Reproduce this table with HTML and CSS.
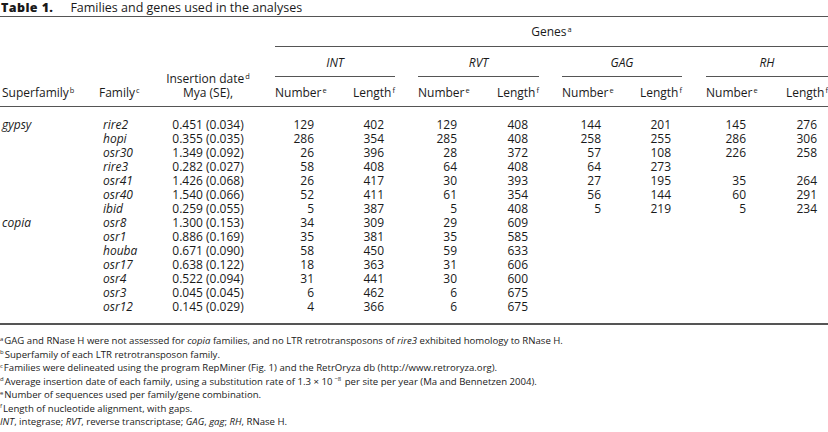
FILE: index.html
```html
<!DOCTYPE html>
<html>
<head>
<meta charset="utf-8">
<link rel="stylesheet" href="styles.css">
</head>
<body>
<div class="page">
  <div class="title"><b>Table 1.</b><span class="title-text">Families and genes used in the analyses</span></div>

  <div class="thead">
    <div class="genes">Genes<sup>a</sup></div>
    <div class="grp g1"><i>INT</i></div>
    <div class="grp g2"><i>RVT</i></div>
    <div class="grp g3"><i>GAG</i></div>
    <div class="grp g4"><i>RH</i></div>
    <div class="hc sf">Superfamily<sup>b</sup></div>
    <div class="hc fam">Family<sup>c</sup></div>
    <div class="hc ins">Insertion date<sup>d</sup><br>Mya (SE),</div>
    <div class="hc num c4">Number<sup>e</sup></div>
    <div class="hc len c5">Length<sup>f</sup></div>
    <div class="hc num c7">Number<sup>e</sup></div>
    <div class="hc len c8">Length<sup>f</sup></div>
    <div class="hc num c10">Number<sup>e</sup></div>
    <div class="hc len c11">Length<sup>f</sup></div>
    <div class="hc num c13">Number<sup>e</sup></div>
    <div class="hc len c14">Length<sup>f</sup></div>
  </div>

  <div class="tbody">
    <div class="row"><i class="sf">gypsy</i><i class="fam">rire2</i><span class="ins">0.451 (0.034)</span><span class="n c4">129</span><span class="l c5">402</span><span class="n c7">129</span><span class="l c8">408</span><span class="n c10">144</span><span class="l c11">201</span><span class="n c13">145</span><span class="l c14">276</span></div>
    <div class="row"><i class="fam">hopi</i><span class="ins">0.355 (0.035)</span><span class="n c4">286</span><span class="l c5">354</span><span class="n c7">285</span><span class="l c8">408</span><span class="n c10">258</span><span class="l c11">255</span><span class="n c13">286</span><span class="l c14">306</span></div>
    <div class="row"><i class="fam">osr30</i><span class="ins">1.349 (0.092)</span><span class="n c4">26</span><span class="l c5">396</span><span class="n c7">28</span><span class="l c8">372</span><span class="n c10">57</span><span class="l c11">108</span><span class="n c13">226</span><span class="l c14">258</span></div>
    <div class="row"><i class="fam">rire3</i><span class="ins">0.282 (0.027)</span><span class="n c4">58</span><span class="l c5">408</span><span class="n c7">64</span><span class="l c8">408</span><span class="n c10">64</span><span class="l c11">273</span></div>
    <div class="row"><i class="fam">osr41</i><span class="ins">1.426 (0.068)</span><span class="n c4">26</span><span class="l c5">417</span><span class="n c7">30</span><span class="l c8">393</span><span class="n c10">27</span><span class="l c11">195</span><span class="n c13">35</span><span class="l c14">264</span></div>
    <div class="row"><i class="fam">osr40</i><span class="ins">1.540 (0.066)</span><span class="n c4">52</span><span class="l c5">411</span><span class="n c7">61</span><span class="l c8">354</span><span class="n c10">56</span><span class="l c11">144</span><span class="n c13">60</span><span class="l c14">291</span></div>
    <div class="row"><i class="fam">ibid</i><span class="ins">0.259 (0.055)</span><span class="n c4">5</span><span class="l c5">387</span><span class="n c7">5</span><span class="l c8">408</span><span class="n c10">5</span><span class="l c11">219</span><span class="n c13">5</span><span class="l c14">234</span></div>
    <div class="row"><i class="sf">copia</i><i class="fam">osr8</i><span class="ins">1.300 (0.153)</span><span class="n c4">34</span><span class="l c5">309</span><span class="n c7">29</span><span class="l c8">609</span></div>
    <div class="row"><i class="fam">osr1</i><span class="ins">0.886 (0.169)</span><span class="n c4">35</span><span class="l c5">381</span><span class="n c7">35</span><span class="l c8">585</span></div>
    <div class="row"><i class="fam">houba</i><span class="ins">0.671 (0.090)</span><span class="n c4">58</span><span class="l c5">450</span><span class="n c7">59</span><span class="l c8">633</span></div>
    <div class="row"><i class="fam">osr17</i><span class="ins">0.638 (0.122)</span><span class="n c4">18</span><span class="l c5">363</span><span class="n c7">31</span><span class="l c8">606</span></div>
    <div class="row"><i class="fam">osr4</i><span class="ins">0.522 (0.094)</span><span class="n c4">31</span><span class="l c5">441</span><span class="n c7">30</span><span class="l c8">600</span></div>
    <div class="row"><i class="fam">osr3</i><span class="ins">0.045 (0.045)</span><span class="n c4">6</span><span class="l c5">462</span><span class="n c7">6</span><span class="l c8">675</span></div>
    <div class="row"><i class="fam">osr12</i><span class="ins">0.145 (0.029)</span><span class="n c4">4</span><span class="l c5">366</span><span class="n c7">6</span><span class="l c8">675</span></div>
  </div>

  <div class="notes">
    <p><sup>a</sup>GAG and RNase H were not assessed for <i>copia</i> families, and no LTR retrotransposons of <i>rire3</i> exhibited homology to RNase H.</p>
    <p><sup>b</sup>Superfamily of each LTR retrotransposon family.</p>
    <p><sup>c</sup>Families were delineated using the program RepMiner (Fig. 1) and the RetrOryza db (http://www.retroryza.org).</p>
    <p><sup>d</sup>Average insertion date of each family, using a substitution rate of 1.3 &times; 10<sup class="exp">&minus;8</sup> per site per year (Ma and Bennetzen 2004).</p>
    <p><sup>e</sup>Number of sequences used per family/gene combination.</p>
    <p><sup>f</sup>Length of nucleotide alignment, with gaps.</p>
    <p><i>INT</i>, integrase; <i>RVT</i>, reverse transcriptase; <i>GAG</i>, <i>gag</i>; <i>RH</i>, RNase H.</p>
  </div>
</div>
</body>
</html>
```

FILE: styles.css
```css
html, body {
  margin: 0;
  padding: 0;
  background: #ffffff;
}

body {
  font-family: "Open Sans", "Liberation Sans", sans-serif;
  color: #1a1a1a;
  font-size: 12px;
}

.page {
  width: 828px;
  padding-top: 1px;
}

sup {
  font-size: 0.62em;
  line-height: 0;
  vertical-align: 0.55em;
  margin-left: 1px;
}

.title {
  height: 15px;
  line-height: 13px;
  font-size: 12.5px;
  padding-left: 1px;
  display: flex;
  gap: 17px;
}

.title b {
  font-weight: 800;
  letter-spacing: 0.4px;
}

.thead,
.row {
  display: grid;
  grid-template-columns: 97px 63px 115px 60px 60px 23px 60px 61px 23px 60px 60px 24px 61px 61px;
}

.thead {
  border-top: 1px solid #555;
  border-bottom: 1px solid #555;
  grid-template-rows: 30px 30px 29px;
  line-height: 14px;
}

.genes {
  grid-column: 4 / 15;
  grid-row: 1;
  border-bottom: 1px solid #555;
  text-align: center;
  padding-top: 8px;
}

.grp {
  grid-row: 2;
  border-bottom: 1px solid #555;
  text-align: center;
  padding-top: 9px;
}

.g1 { grid-column: 4 / 6; }
.g2 { grid-column: 7 / 9; }
.g3 { grid-column: 10 / 12; }
.g4 { grid-column: 13 / 15; }

.hc {
  grid-row: 3;
  align-self: end;
  padding-bottom: 6px;
  white-space: nowrap;
}

.hc.sf { grid-column: 1; padding-left: 2px; }
.hc.fam { grid-column: 2; padding-left: 2px; }
.hc.ins {
  grid-column: 3;
  grid-row: 2 / 4;
  text-align: center;
  padding-right: 19px;
  line-height: 14px;
}

.hc.num { text-align: left; }
.hc.len { text-align: right; }

.c4 { grid-column: 4; }
.c5 { grid-column: 5; }
.c7 { grid-column: 7; }
.c8 { grid-column: 8; }
.c10 { grid-column: 10; }
.c11 { grid-column: 11; }
.c13 { grid-column: 13; }
.c14 { grid-column: 14; }

.tbody {
  padding: 11px 0 9px;
  border-bottom: 2px solid #555;
}

.row {
  line-height: 14px;
  height: 14px;
}

.row .sf { grid-column: 1; padding-left: 2px; }
.row .fam { grid-column: 2; padding-left: 6px; }
.row .ins { grid-column: 3; text-align: center; padding-right: 19px; }
.row .n { text-align: right; padding-right: 21px; }
.row .l { text-align: right; padding-right: 11px; }

.notes {
  padding-top: 9px;
  font-size: 9.6px;
  line-height: 13.5px;
}

.notes p {
  margin: 0;
}

.notes sup {
  margin-left: 0;
  margin-right: 1px;
}

.notes sup.exp {
  margin-left: 2px;
}
```
